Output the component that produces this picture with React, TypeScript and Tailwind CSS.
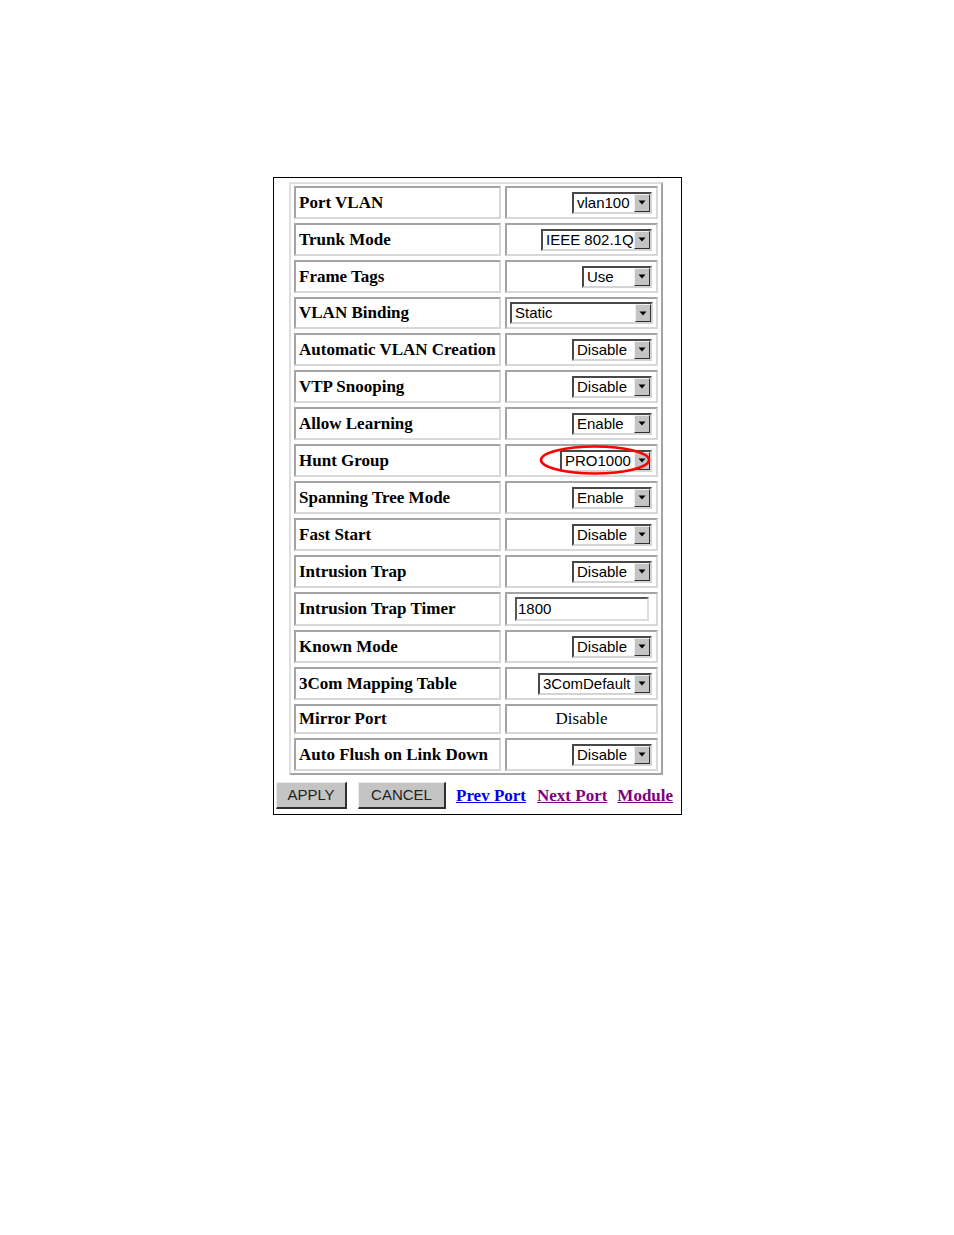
import React from "react";

const serif = "font-['Liberation_Serif','Times_New_Roman',serif]";
const sans = "font-['Liberation_Sans',Arial,sans-serif]";

const cellBase =
  "relative flex items-center h-full border-2 border-t-[#a4a4a4] border-l-[#a4a4a4] border-b-[#d8d8d8] border-r-[#d8d8d8] bg-white";

function Arrow() {
  return (
    <div className="w-[16px] h-full bg-[#c4c4c4] border border-t-[#f0f0f0] border-l-[#f0f0f0] border-r-[#303030] border-b-[#303030] flex items-center justify-center">
      <svg width="8" height="5" viewBox="0 0 8 5">
        <polygon points="0.5,0.5 7.5,0.5 4,4.5" fill="#000" />
      </svg>
    </div>
  );
}

function Select({ value, w }: { value: string; w: string }) {
  return (
    <div
      className={`flex h-[22px] ${w} border-2 border-t-[#484848] border-l-[#484848] border-r-[#d4d4d4] border-b-[#d4d4d4] bg-white`}
    >
      <div className={`flex-1 ${sans} text-[15px] leading-[18px] pl-[3px] text-black whitespace-nowrap overflow-hidden`}>
        {value}
      </div>
      <Arrow />
    </div>
  );
}

type Row = {
  label: string;
  h: string;
  right: React.ReactNode;
  align?: string;
  circle?: boolean;
};

const rows: Row[] = [
  { label: "Port VLAN", h: "h-[33px]", right: <Select value="vlan100" w="w-[80px]" /> },
  { label: "Trunk Mode", h: "h-[33px]", right: <Select value="IEEE 802.1Q" w="w-[111px]" /> },
  { label: "Frame Tags", h: "h-[33px]", right: <Select value="Use" w="w-[70px]" /> },
  { label: "VLAN Binding", h: "h-[32px]", right: <Select value="Static" w="w-[143px]" />, align: "justify-start pl-[3px]" },
  { label: "Automatic VLAN Creation", h: "h-[33px]", right: <Select value="Disable" w="w-[80px]" /> },
  { label: "VTP Snooping", h: "h-[33px]", right: <Select value="Disable" w="w-[80px]" /> },
  { label: "Allow Learning", h: "h-[33px]", right: <Select value="Enable" w="w-[80px]" /> },
  { label: "Hunt Group", h: "h-[33px]", right: <Select value="PRO1000" w="w-[92px]" />, circle: true },
  { label: "Spanning Tree Mode", h: "h-[33px]", right: <Select value="Enable" w="w-[80px]" /> },
  { label: "Fast Start", h: "h-[33px]", right: <Select value="Disable" w="w-[80px]" /> },
  { label: "Intrusion Trap", h: "h-[33px]", right: <Select value="Disable" w="w-[80px]" /> },
  {
    label: "Intrusion Trap Timer",
    h: "h-[34px]",
    align: "justify-start pl-[8px]",
    right: (
      <div className="w-[134px] h-[24px] border-2 border-t-[#585858] border-l-[#585858] border-r-[#dcdcdc] border-b-[#dcdcdc] bg-white flex items-center">
        <span className={`${sans} text-[15px] leading-[18px] pl-[1px] text-black`}>1800</span>
      </div>
    ),
  },
  { label: "Known Mode", h: "h-[33px]", right: <Select value="Disable" w="w-[80px]" /> },
  { label: "3Com Mapping Table", h: "h-[33px]", right: <Select value="3ComDefault" w="w-[114px]" /> },
  {
    label: "Mirror Port",
    h: "h-[30px]",
    align: "justify-center",
    right: <span className={`${serif} text-[17px] text-black`}>Disable</span>,
  },
  { label: "Auto Flush on Link Down", h: "h-[33px]", right: <Select value="Disable" w="w-[80px]" /> },
];

const btn = `h-[27px] bg-[#c4c4c4] border border-t-[#ececec] border-l-[#ececec] border-r-[#303030] border-b-[#303030] border-r-2 border-b-2 ${sans} text-[15px] text-[#222]`;

export default function App() {
  return (
    <div className="w-[954px] h-[1235px] bg-white">
      <div className="absolute left-[273px] top-[177px] w-[409px] h-[638px] border border-black bg-white">
        <div className="ml-[15px] mt-[4px] w-[374px] border-2 border-t-[#dedede] border-l-[#dedede] border-r-[#a4a4a4] border-b-[#a4a4a4] pt-[2px] pb-[2px] pl-[3px] pr-[2px] flex flex-col gap-[4px]">
          {rows.map((r) => (
            <div key={r.label} className={`flex gap-[4px] ${r.h}`}>
              <div className={`${cellBase} w-[207px] pl-[3px]`}>
                <span className={`${serif} font-bold text-[17px] text-black whitespace-nowrap`}>{r.label}</span>
              </div>
              <div className={`${cellBase} w-[153px] ${r.align ?? "justify-end pr-[4px]"}`}>
                {r.right}
                {r.circle && (
                  <svg
                    className="absolute left-[31px] top-[-2px] w-[114px] h-[32px]"
                    viewBox="0 0 114 32"
                  >
                    <ellipse cx="57" cy="16" rx="54" ry="13.5" fill="none" stroke="#ff0000" strokeWidth="2.6" />
                  </svg>
                )}
              </div>
            </div>
          ))}
        </div>
        <div className="flex items-center mt-[7px] ml-[2px]">
          <button className={`${btn} w-[71px]`}>APPLY</button>
          <button className={`${btn} w-[88px] ml-[11px]`}>CANCEL</button>
          <a className={`${serif} font-bold text-[17px] underline text-[#0000ee] ml-[10px]`}>Prev Port</a>
          <a className={`${serif} font-bold text-[17px] underline text-[#800080] ml-[11px]`}>Next Port</a>
          <a className={`${serif} font-bold text-[17px] underline text-[#800080] ml-[10px]`}>Module</a>
        </div>
      </div>
    </div>
  );
}
